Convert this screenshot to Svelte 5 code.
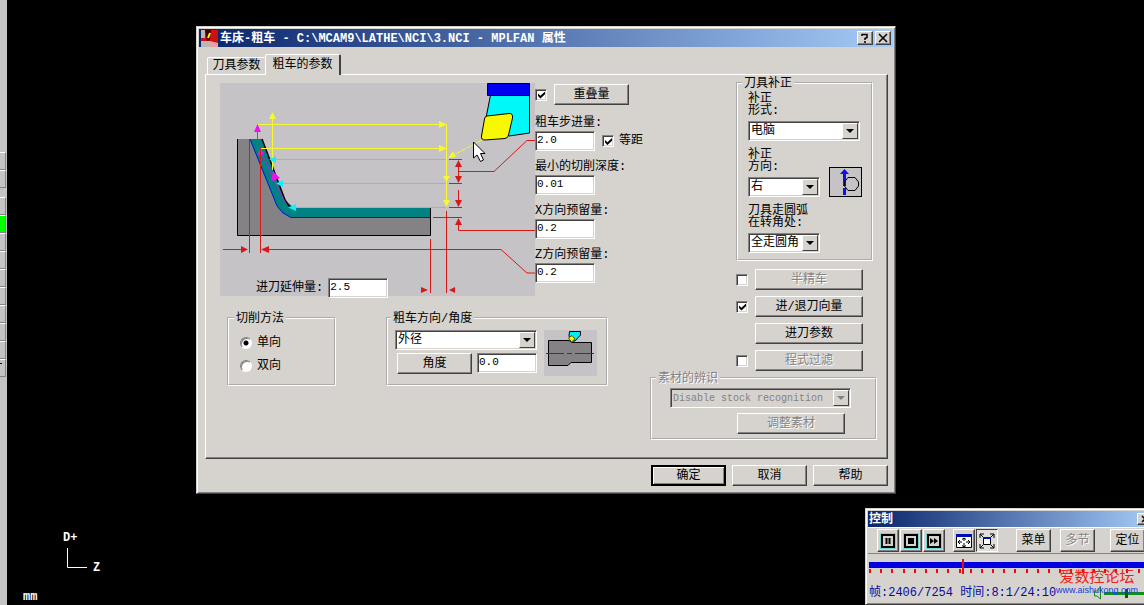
<script lang="ts">
let title: string = 'C:\\MCAM9\\LATHE\\NCI\\3.NCI';

let overlap: boolean = $state(true);
let equalStep: boolean = $state(true);
let semiFinish: boolean = $state(false);
let leadInOut: boolean = $state(true);
let filter: boolean = $state(false);

let cutMethod: string = $state('one');
let frame: number = $state(2406);

let fields = $state([
    { id: 'step', label: '粗车步进量:', value: '2.0' },
    { id: 'min-depth', label: '最小的切削深度:', value: '0.01' },
    { id: 'stock-x', label: 'X方向预留量:', value: '0.2' },
    { id: 'stock-z', label: 'Z方向预留量:', value: '0.2' },
]);

const toolButtons = Array.from({ length: 10 }, (_, i) => i);
const ticks = Array.from({ length: 26 }, (_, i) => i);
</script>

{#snippet combo(id, options, disabled, label)}
    <div class="combo" class:disabled>
        <select {id} {disabled} aria-label={label}>
            {#each options as option}
                <option>{option}</option>
            {/each}
        </select>
        <span class="drop"></span>
    </div>
{/snippet}

<div class="desktop">
    <div class="strip">
        <button aria-label="1"></button>
        <button aria-label="2"></button>
        <div class="strip-gap"></div>
        {#each toolButtons as n}
            <button class:active={n == 1} class:last={n == 9} aria-label={`${n + 3}`}></button>
        {/each}
    </div>

    <svg class="axis" width="44" height="46" viewBox="0 0 44 46">
        <text x="0" y="11">D+</text>
        <path d="M4.500 18V37.500H24" fill="none" stroke="#fff" />
        <text x="30" y="41">Z</text>
    </svg>
    <span class="unit">mm</span>

    <main class="window dialog">
        <header class="titlebar">
            <svg width="17" height="17" viewBox="0 0 17 17">
                <rect width="17" height="17" fill="#d01010" />
                <path d="M0 0H4V8H0ZM0 11H9V17H0Z" fill="#b8b8b8" />
                <path d="M4 0H10L9 10L6 11Z" fill="#400" />
                <path d="M9 3L7 8" stroke="#ff0" stroke-width="2" />
                <path d="M9 11L17 13V17H9Z" fill="#e8a0a0" />
            </svg>
            <h1>车床-粗车 - {title} - MPLFAN 属性</h1>
            <button class="caption" aria-label="帮助">
                <svg width="10" height="10" viewBox="0 0 10 10"><path d="M2 3V1.500H7V4.500L5 5.500V7M5 8V10" fill="none" stroke="#000" stroke-width="1.500" /></svg>
            </button>
            <button class="caption" aria-label="关闭">
                <svg width="10" height="10" viewBox="0 0 10 10"><path d="M1 1L9 9M9 1L1 9" stroke="#000" stroke-width="1.500" /></svg>
            </button>
        </header>

        <div class="body">
            <div class="tabs" role="tablist">
                <button role="tab" aria-selected="false">刀具参数</button>
                <button role="tab" aria-selected="true" class="current">粗车的参数</button>
            </div>

            <div class="page">
                <div class="left">
                    <div class="top">
                        <div class="diagram">
                            <svg width="315" height="213" viewBox="220 83 315 213">
                                <!-- stock and the finished profile -->
                                <path d="M237.500 139H250L277 207L431 217V235.500H237.500Z" fill="#848284" />
                                <path d="M250 139H262L285 200L294 208H431V217H291L283 213L277 206Z" fill="#008284" />
                                <path d="M250 139L277 206L283 213L291 217.500H430" fill="none" stroke="#0010d0" />
                                <path d="M262 139L285 200L289 206L294 208" fill="none" stroke="#000" stroke-width="1.500" />
                                <path d="M237.500 139V235.500H430.500V208" fill="none" stroke="#000" />

                                <g fill="none" stroke="#f8f830">
                                    <path d="M258 124.500H446.500V205M260 148.500H446M272.500 116V170" />
                                    <path d="M482 140L450 157" stroke-dasharray="5 1" />
                                </g>
                                <path d="M272.500 112L276 119H269ZM447 124.500L439 121V128ZM447 148.500L439 145V152ZM446.500 182L443 176H450ZM446.500 207L443 200H450ZM448 158L453 151L456 157Z" fill="#f8f830" />

                                <g fill="#10f0f8">
                                    <rect x="272" y="159" width="174" height="1" />
                                    <rect x="280" y="183" width="166" height="1" />
                                    <rect x="292" y="207" width="154" height="1" />
                                    <path d="M269 159.500L276 156V163ZM276 183.500L283 180V187ZM288 207.500L296 204V211Z" />
                                </g>

                                <path d="M257.500 128V139M260 149L276 184L286 204" fill="none" stroke="#c020d8" />
                                <path d="M257.500 124L261 132H254ZM260 147L264 154L258 155ZM273 171L280 178L271 181Z" fill="#f010f0" />

                                <g fill="none" stroke="#d81818">
                                    <path d="M249.500 139V253M260.500 148V253M223 249.500H246M262 249.500H501L527 273H535" />
                                    <path d="M430.500 239V293M446.500 211V293" />
                                    <path d="M449 159.500H462M449 183.500H462M449 207.500H462M433 217.500H462" />
                                    <path d="M458.500 162V181M458.500 190V205M458.500 220V230.500H535M458 171.500H494L527 140.500H535" />
                                </g>
                                <path d="M248 249.500L241 246V253ZM261 249.500L269 246V253ZM428 290L421 287V293ZM449 290L455 287V293ZM458.500 160L462 167H455ZM458.500 183L462 176H455ZM458.500 207L462 200H455ZM458.500 218L462 225H455Z" fill="#d81818" />

                                <!-- insert and holder -->
                                <path d="M490.500 95L486 118L509 136L529.500 133V95Z" fill="#00f8f8" stroke="#000" />
                                <path d="M487.500 83.500H529.500V95.500H487.500Z" fill="#0000f0" stroke="#000" />
                                <path d="M487 116Q485 116 484.500 119L481.500 136Q481 140 485 140L505 138.500Q508 138 508.500 135L512.500 118Q513 113 509 113.500Z" fill="#f8f800" stroke="#000" />

                                <path d="M473.500 142V158L477 155L480.500 161.500L483.500 160L480.500 153.500H485Z" fill="#fff" stroke="#000" />
                            </svg>
                            <div class="extension">
                                <label for="extension">进刀延伸量:</label>
                                <input id="extension" type="text" class="edit" value="2.5">
                            </div>
                        </div>

                        <div class="fields">
                            <div class="check-row">
                                <input type="checkbox" aria-label="重叠量" bind:checked={overlap}>
                                <button class="push small">重叠量</button>
                            </div>
                            {#each fields as field}
                                <div class="field">
                                    <label for={field.id}>{field.label}</label>
                                    <div class="check-row">
                                        <input id={field.id} type="text" class="edit" bind:value={field.value}>
                                        {#if field.id == 'step'}
                                            <label class="equal"><input type="checkbox" bind:checked={equalStep}>等距</label>
                                        {/if}
                                    </div>
                                </div>
                            {/each}
                        </div>
                    </div>

                    <div class="groups">
                        <fieldset class="method">
                            <legend>切削方法</legend>
                            <label><input type="radio" name="method" value="one" bind:group={cutMethod}>单向</label>
                            <label><input type="radio" name="method" value="both" bind:group={cutMethod}>双向</label>
                        </fieldset>

                        <fieldset class="direction">
                            <legend>粗车方向/角度</legend>
                            <div class="direction-inputs">
                                {@render combo('direction', ['外径', '内径', '端面'], false, '粗车方向')}
                                <div class="angle">
                                    <button class="push small">角度</button>
                                    <input type="text" class="edit" aria-label="角度" value="0.0">
                                </div>
                            </div>
                            <svg class="preview" width="53" height="46" viewBox="0 0 53 46">
                                <path d="M4.500 10.500H25L28 12.500H47.500V32.500H27L24 35.500H4.500Z" fill="#848284" stroke="#000" />
                                <path d="M2 23.500H20M23 23.500H28M31 23.500H50" stroke="#a01010" />
                                <path d="M25.500 1.500H36.500V5L31 11H27L25 6Z" fill="#00f0f8" stroke="#000" />
                                <path d="M24.500 8L28 5.500L31 9L27.500 12Z" fill="#f8f800" stroke="#550" />
                            </svg>
                        </fieldset>
                    </div>
                </div>

                <div class="right">
                    <div class="side">
                        <fieldset class="comp">
                            <legend>刀具补正</legend>
                            <div class="stack wide">
                                <label for="comp-type">补正<br>形式:</label>
                                {@render combo('comp-type', ['电脑', '控制器'], false, '补正形式')}
                            </div>
                            <div class="comp-dir">
                                <div class="stack">
                                    <label for="comp-side">补正<br>方向:</label>
                                    {@render combo('comp-side', ['右', '左'], false, '补正方向')}
                                </div>
                                <svg class="comp-icon" width="33" height="30" viewBox="0 0 33 30">
                                    <rect x="0.500" y="0.500" width="32" height="29" fill="#c6c3c6" stroke="#000" />
                                    <path d="M15.500 5V19M15.500 21V28" stroke="#1010e0" stroke-width="3" />
                                    <path d="M15.500 2L20 7H11Z" fill="#1010e0" />
                                    <path d="M19 10.500H26L29.500 15V19L26 23.500H19L15.500 19V15Z" fill="none" stroke="#000" />
                                </svg>
                            </div>
                            <div class="stack corner">
                                <label for="corner">刀具走圆弧<br>在转角处:</label>
                                {@render combo('corner', ['全走圆角', '尖角', '无'], false, '刀具走圆弧在转角处')}
                            </div>
                        </fieldset>

                        <div class="options">
                            <input type="checkbox" aria-label="半精车" bind:checked={semiFinish}>
                            <button class="push" disabled={!semiFinish}>半精车</button>
                            <input type="checkbox" aria-label="进/退刀向量" bind:checked={leadInOut}>
                            <button class="push" disabled={!leadInOut}>进/退刀向量</button>
                            <span></span>
                            <button class="push">进刀参数</button>
                            <input type="checkbox" aria-label="程式过滤" bind:checked={filter}>
                            <button class="push" disabled={!filter}>程式过滤</button>
                        </div>
                    </div>

                    <fieldset class="stock" disabled>
                        <legend>素材的辨识</legend>
                        {@render combo('stock', ['Disable stock recognition'], true, '素材的辨识')}
                        <button class="push" disabled>调整素材</button>
                    </fieldset>
                </div>
            </div>

            <footer>
                <button class="push small default">确定</button>
                <button class="push small">取消</button>
                <button class="push small">帮助</button>
            </footer>
        </div>
    </main>

    <section class="window player">
        <header class="titlebar">
            <h2>控制</h2>
            <button class="caption" aria-label="关闭">
                <svg width="8" height="8" viewBox="0 0 8 8"><path d="M1 1L7 7M7 1L1 7" stroke="#000" stroke-width="1.500" /></svg>
            </button>
        </header>
        <div class="toolbar">
            <button class="tool media" aria-label="暂停">
                <svg width="14" height="14" viewBox="0 0 14 14"><path d="M1 1H13V13H1Z" fill="none" stroke="#000" stroke-width="2" /><path d="M5.500 4V10M8.500 4V10" stroke="#000" stroke-width="2" /></svg>
            </button>
            <button class="tool media" aria-label="停止">
                <svg width="14" height="14" viewBox="0 0 14 14"><path d="M1 1H13V13H1Z" fill="none" stroke="#000" stroke-width="2" /><path d="M4 4H10V10H4Z" /></svg>
            </button>
            <button class="tool media" aria-label="快进">
                <svg width="14" height="14" viewBox="0 0 14 14"><path d="M1 1H13V13H1Z" fill="none" stroke="#000" stroke-width="2" /><path d="M3 4L7 7L3 10ZM7 4L11 7L7 10Z" /></svg>
            </button>
            <button class="tool fit" aria-label="适合窗口">
                <svg width="16" height="14" viewBox="0 0 16 14">
                    <path d="M0.500 0.500H15.500V13.500H0.500Z" fill="#fff" stroke="#000" />
                    <path d="M0 0H16V3H0Z" fill="#0010b0" />
                    <path d="M2 8H6M10 8H14M8 4V7M8 9V13M4 6L2 8L4 10M12 6L14 8L12 10M6 5.500L8 4L10 5.500M6 11.500L8 13L10 11.500" fill="none" stroke="#000" />
                </svg>
            </button>
            <button class="tool pressed" aria-label="全屏">
                <svg width="16" height="16" viewBox="0 0 16 16">
                    <path d="M4.500 4.500H11.500V11.500H4.500Z" fill="#fff" stroke="#000" />
                    <path d="M4 4H12V6H4Z" fill="#0010b0" />
                    <path d="M1 5V1H5M11 1H15V5M15 11V15H11M5 15H1V11M1 1L4 4M15 1L12 4M15 15L12 12M1 15L4 12" fill="none" stroke="#000" />
                </svg>
            </button>
            <button class="tool text menu">菜单</button>
            <button class="tool text" disabled>多节</button>
            <button class="tool text locate">定位</button>
        </div>
        <div class="timeline">
            <input type="range" min="0" max="7254" aria-label="帧" bind:value={frame}>
            <div class="ticks">
                {#each ticks as _}
                    <i></i>
                {/each}
            </div>
        </div>
        <div class="status">
            <span>帧:{frame}/7254 时间:8:1/24:10</span>
            <svg width="60" height="14" viewBox="0 0 60 14">
                <path d="M1.500 5V10H4L7.500 13V1L4 5Z" fill="none" stroke="#109010" />
                <path d="M11 7.500H60" stroke="#109010" stroke-width="3" />
                <path d="M32 3H35V12H32Z" fill="#006000" />
            </svg>
        </div>
    </section>

    <div class="watermark">
        <strong>爱数控论坛</strong>
        <a href="http://www.aishukong.com">www.aishukong.com</a>
    </div>
</div>

<style>
:global(body) {
    background: #000;
}

.desktop {
    position: relative;
    min-height: 100vh;
    overflow: hidden;
    background: #000;
    color: #000;
    font: 12px/16px "Liberation Mono", "Noto Sans CJK SC", monospace;
}

.desktop * {
    box-sizing: border-box;
}

button, input, select {
    margin: 0;
    padding: 0;
    border: 0;
    border-radius: 0;
    font: inherit;
    color: inherit;
    background: #d6d3ce;
}

svg {
    display: block;
    flex: none;
}

label {
    white-space: nowrap;
}

/* left tool strip */
.strip {
    position: absolute;
    top: 0;
    bottom: 0;
    left: 0;
    width: 7px;
    padding: 152px 1px 0 0;
    background: #c6c3c6;
}

.strip button {
    display: block;
    width: 100%;
    height: 18px;
    background: #c6c3c6;
    border-top: 1px solid #fff;
    border-right: 1px solid #848284;
    border-bottom: 1px solid #848284;
}

.strip .active {
    background: #00ff00;
}

.strip .last {
    background: linear-gradient(#000, #000) 0 3px / 2px 1px no-repeat #c6c3c6;
}

.strip-gap {
    height: 9px;
}

.axis {
    position: absolute;
    left: 63px;
    bottom: 29px;
    fill: #fff;
    font-weight: bold;
}

.unit {
    position: absolute;
    left: 23px;
    bottom: 0;
    color: #fff;
    font-weight: bold;
}

/* windows */
.window {
    position: absolute;
    padding: 2px;
    background: #d6d3ce;
    border: 1px solid;
    border-color: #d6d3ce #424142 #424142 #d6d3ce;
    box-shadow: inset 1px 1px #fff, inset -1px -1px #848284;
}

.dialog {
    top: 26px;
    left: 196px;
    right: 248px;
    min-width: 700px;
}

.titlebar {
    display: flex;
    align-items: center;
    gap: 2px;
    height: 18px;
    padding: 0 2px;
    color: #fff;
    background: linear-gradient(90deg, #08246b, #a5cbf7);
}

h1, h2 {
    flex: 1;
    margin: 0;
    padding-top: 1px;
    font-size: 12px;
    line-height: 18px;
    white-space: nowrap;
}

.caption {
    display: grid;
    place-items: center;
    width: 16px;
    height: 14px;
    color: #000;
}

.caption, .push, .tool {
    border: 1px solid;
    border-color: #fff #424142 #424142 #fff;
    box-shadow: inset -1px -1px #848284;
}

.body {
    padding: 7px 5px 5px 6px;
}

.tabs {
    display: flex;
    align-items: flex-end;
    padding-left: 2px;
}

.tabs button {
    width: 58px;
    height: 17px;
    border-top: 1px solid #fff;
    border-left: 1px solid #fff;
    border-radius: 2px 2px 0 0;
    white-space: nowrap;
}

.tabs .current {
    position: relative;
    width: 76px;
    height: 21px;
    margin-bottom: -1px;
    border-right: 2px solid #424142;
}

.page {
    display: flex;
    justify-content: space-between;
    padding: 1px 10px 18px 14px;
    border: 1px solid;
    border-color: #fff #424142 #424142 #fff;
    box-shadow: inset -1px -1px #848284;
}

.left {
    padding-top: 7px;
}

.top {
    display: flex;
}

.diagram {
    position: relative;
    background: #c6c3c6;
}

.extension {
    position: absolute;
    left: 36px;
    bottom: -2px;
    display: flex;
    align-items: center;
    gap: 5px;
}

.fields {
    display: flex;
    flex-direction: column;
    gap: 8px;
    padding-top: 1px;
}

.fields > .check-row {
    margin-bottom: 2px;
}

.field label {
    display: block;
}

.check-row {
    display: flex;
    align-items: center;
    gap: 7px;
}

.field .equal {
    display: flex;
    align-items: center;
    gap: 5px;
}

.edit {
    width: 60px;
    height: 20px;
    padding: 0 0 2px 1px;
    background: #fff;
    font-size: 11px;
}

.edit, .combo, input[type="checkbox"] {
    border: 1px solid;
    border-color: #848284 #fff #fff #848284;
    box-shadow: inset 1px 1px #424142, inset -1px -1px #d6d3ce;
}

input[type="checkbox"] {
    appearance: none;
    flex: none;
    width: 12px;
    height: 12px;
    background: #fff;
}

input[type="checkbox"]:checked::before {
    content: "";
    display: block;
    width: 7px;
    height: 7px;
    margin: 2px;
    background: #000;
    clip-path: polygon(0 30%, 35% 60%, 100% 0, 100% 40%, 35% 100%, 0 65%);
}

input[type="radio"] {
    appearance: none;
    width: 12px;
    height: 12px;
    background: #fff;
    border: 1px solid;
    border-color: #848284 #fff #fff #848284;
    border-radius: 50%;
    box-shadow: inset 1px 1px #848284;
}

input[type="radio"]:checked {
    background: radial-gradient(circle at 5px 5px, #000 2px, #fff 3px);
}

.push {
    width: 108px;
    height: 21px;
    line-height: 18px;
    white-space: nowrap;
}

.push.small {
    width: 75px;
}

.push.default {
    border: 2px solid #000;
    border-color: #000;
    line-height: 16px;
    box-shadow: inset 1px 1px #fff, inset -1px -1px #848284;
}

.push:disabled, .tool:disabled {
    color: #848284;
    text-shadow: 1px 1px #fff;
}

fieldset {
    min-width: 0;
    margin: 0;
    border: 2px groove #fff;
}

legend {
    height: 14px;
    padding: 0 2px;
    line-height: 16px;
}

.groups {
    display: flex;
    gap: 50px;
    padding: 15px 0 0 7px;
}

.method {
    width: 109px;
    height: 75px;
    padding: 10px 11px 0;
}

.method legend {
    margin-left: -6px;
}

.direction legend {
    margin-left: -4px;
}

.method label {
    display: flex;
    align-items: center;
    gap: 5px;
    margin-bottom: 7px;
}

.direction {
    display: flex;
    gap: 7px;
    width: 222px;
    height: 75px;
    padding: 5px 7px;
}

.direction-inputs {
    width: 142px;
}

.angle {
    display: flex;
    justify-content: space-between;
    padding: 3px 0 0 2px;
}

.preview {
    background: #c6c3c6;
}

.combo {
    position: relative;
    height: 20px;
    background: #fff;
}

.combo select {
    appearance: none;
    display: block;
    width: 100%;
    height: 18px;
    padding-top: 1px;
    padding-left: 2px;
    background: transparent;
    line-height: 17px;
}

.drop {
    position: absolute;
    top: 1px;
    right: 1px;
    bottom: 1px;
    display: grid;
    place-items: center;
    width: 16px;
    background: #d6d3ce;
    border: 1px solid;
    border-color: #fff #424142 #424142 #fff;
    pointer-events: none;
}

.drop::before {
    content: "";
    border: 4px solid transparent;
    border-top-color: #000;
    border-bottom: 0;
}

.combo.disabled {
    color: #848284;
    background: #d6d3ce;
    font-size: 10px;
}

.combo.disabled select {
    opacity: 1;
}

.combo.disabled .drop::before {
    border-top-color: #848284;
}

.right {
    width: 227px;
}

.side {
    padding: 0 4px 0 86px;
}

.comp {
    display: flex;
    flex-direction: column;
    gap: 8px;
    padding: 3px 9px 6px 10px;
}

.comp legend {
    margin-left: -6px;
}

.stack {
    display: flex;
    flex-direction: column;
    gap: 4px;
    width: 72px;
    line-height: 12px;
}

.stack.wide {
    width: 112px;
}

.comp-dir {
    display: flex;
    justify-content: space-between;
    align-items: flex-end;
}

.options {
    display: grid;
    grid-template-columns: 12px 108px;
    align-items: center;
    gap: 6px 7px;
    padding-top: 8px;
}

.stock {
    display: flex;
    flex-direction: column;
    gap: 5px;
    padding: 3px 24px 4px 18px;
    color: #848284;
}

.stock legend {
    margin-left: -14px;
    text-shadow: 1px 1px #fff;
}

.stock .push {
    margin: 0 6px 0 auto;
}

footer {
    display: flex;
    justify-content: flex-end;
    gap: 6px;
    padding-top: 6px;
}

/* playback window, dragged partly past the screen edge */
.player {
    right: -12px;
    bottom: 0;
    width: 291px;
}

.player .titlebar {
    height: 16px;
    padding: 0 0 0 1px;
}

.player .caption {
    height: 12px;
}

.toolbar {
    display: flex;
    align-items: center;
    gap: 1px;
    padding: 1px 0 1px 9px;
    border-top: 1px solid #fff;
    border-bottom: 1px solid #848284;
}

.tool {
    display: grid;
    place-items: center;
    flex: none;
    width: 22px;
    height: 23px;
}

.media svg {
    background: #d6d3ce;
    outline: 1px solid #70d8d0;
}

.fit {
    margin-left: 7px;
}

.tool.pressed {
    border-color: #424142 #fff #fff #424142;
    box-shadow: none;
    background: #e0deda;
}

.tool.text {
    width: 35px;
}

.tool.menu {
    margin-left: 17px;
    margin-right: 8px;
}

.tool.locate {
    margin-left: 14px;
}

.timeline {
    padding: 5px 2px 0 1px;
}

input[type="range"] {
    appearance: none;
    display: block;
    width: 100%;
    height: 15px;
    background: linear-gradient(#0000e0, #0000e0) 0 3px / 100% 6px no-repeat;
}

input[type="range"]::-webkit-slider-thumb {
    appearance: none;
    width: 2px;
    height: 15px;
    background: #e01010;
}

.ticks {
    display: flex;
    justify-content: space-between;
    margin-top: -5px;
}

.ticks i {
    width: 2px;
    height: 4px;
    background: #e01010;
}

.status {
    display: flex;
    align-items: center;
    justify-content: space-between;
    padding: 12px 0 1px 1px;
    color: #0808a0;
    white-space: nowrap;
}

.watermark {
    position: absolute;
    right: 6px;
    bottom: 9px;
    display: flex;
    flex-direction: column;
    align-items: center;
    font-family: "Liberation Sans", "Noto Sans CJK SC", sans-serif;
}

.watermark strong {
    color: #f02020;
    font-size: 15px;
    font-weight: normal;
    line-height: 14px;
}

.watermark a {
    color: #2038e0;
    font-size: 9px;
    line-height: 12px;
    text-decoration: none;
}
</style>
